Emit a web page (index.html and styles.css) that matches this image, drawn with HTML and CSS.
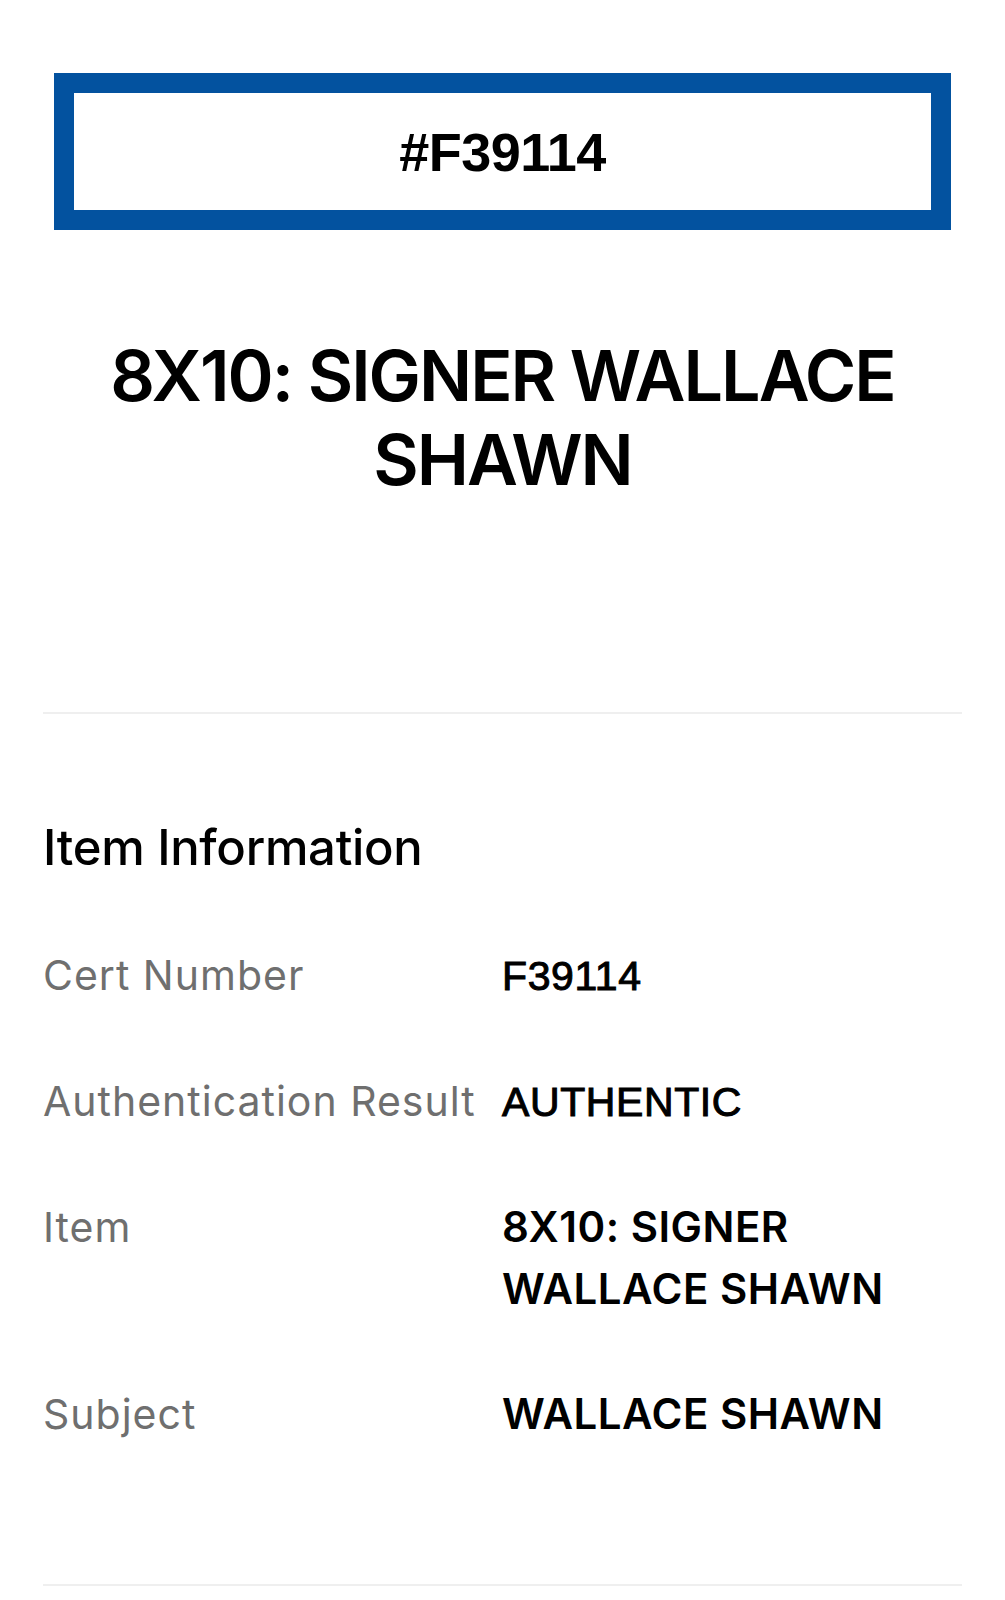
FILE: index.html
```html
<!DOCTYPE html>
<html lang="en">
<head>
  <meta charset="UTF-8">
  <meta name="viewport" content="width=device-width, initial-scale=1.0">
  <title>Certificate F39114</title>
  <link rel="stylesheet" href="styles.css">
</head>
<body>
  <div class="page">
    <!-- Cert number banner -->
    <div class="cert-box">#F39114</div>

    <!-- Item title -->
    <h1 class="item-title">8X10: SIGNER WALLACE SHAWN</h1>

    <hr class="divider">

    <!-- Item information table -->
    <section class="info">
      <h2>Item Information</h2>
      <div class="info-grid">
        <div class="label">Cert Number</div>
        <div class="value plain">F39114</div>

        <div class="label">Authentication Result</div>
        <div class="value plain">AUTHENTIC</div>

        <div class="label">Item</div>
        <div class="value">8X10: SIGNER WALLACE SHAWN</div>

        <div class="label">Subject</div>
        <div class="value">WALLACE SHAWN</div>
      </div>
    </section>

    <hr class="divider bottom">
  </div>
</body>
</html>
```

FILE: styles.css
```css
/* Reset */
* {
  margin: 0;
  padding: 0;
  box-sizing: border-box;
}
body {
  background: #fff;
  color: #000;
  font-family: Inter, "Noto Sans", sans-serif;
}
/* Page column */
.page {
  padding: 73px 43px 0;
}
/* Blue cert banner */
.cert-box {
  height: 157px;
  margin: 0 11px;
  border: 20px solid #03529f;
  display: flex;
  align-items: center;
  justify-content: center;
  font-family: "Liberation Sans", Arial, sans-serif;
  font-weight: bold;
  font-size: 54px;
  letter-spacing: -0.5px;
}
/* Title */
.item-title {
  margin-top: 104px;
  font-size: 70px;
  line-height: 84px;
  font-weight: 600;
  text-align: center;
  letter-spacing: -2px;
}
.divider {
  border: none;
  border-top: 2px solid #efefef;
  margin-top: 210px;
}
.divider.bottom {
  margin-top: 139px;
}
/* Info section */
.info h2 {
  margin-top: 104px;
  font-size: 49px;
  line-height: 60px;
  font-weight: 500;
  letter-spacing: -0.3px;
}
.info-grid {
  margin-top: 66px;
  display: grid;
  grid-template-columns: 459px 420px;
  row-gap: 63px;
  align-items: baseline;
}
.label {
  font-size: 41px;
  line-height: 62px;
  color: #6f6f6f;
  letter-spacing: 1px;
}
.value {
  font-size: 42px;
  line-height: 62px;
  font-weight: 600;
  letter-spacing: 0.5px;
}
.value.plain {
  font-family: "Liberation Sans", Arial, sans-serif;
  font-size: 41px;
  font-weight: normal;
  letter-spacing: 0.6px;
  -webkit-text-stroke: 1px #000;
}
```
